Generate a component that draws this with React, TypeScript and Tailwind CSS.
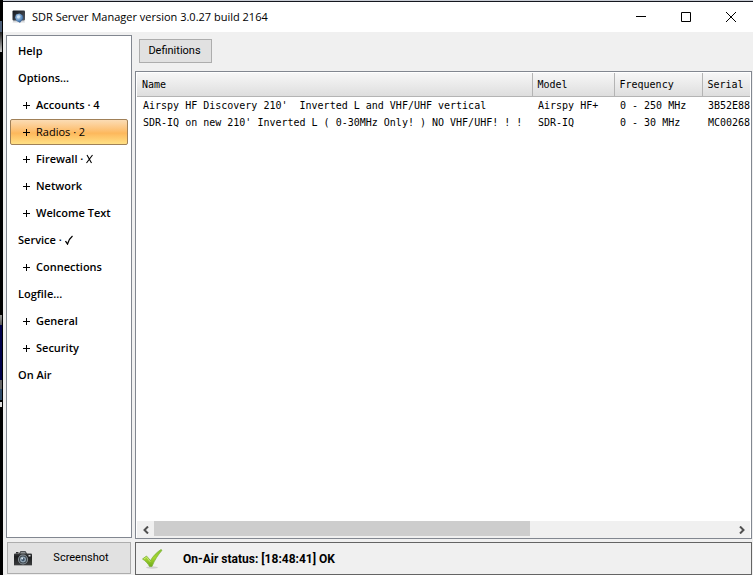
import React from "react";
import clsx from "clsx";

interface NavItem {
  label: string;
  child?: boolean;
  mark?: "cross" | "check";
}

interface Radio {
  name: string;
  model: string;
  frequency: string;
  serial: string;
}

const navItems: NavItem[] = [
  { label: "Help" },
  { label: "Options..." },
  { label: "Accounts · 4", child: true },
  { label: "Radios · 2", child: true },
  { label: "Firewall ·", child: true, mark: "cross" },
  { label: "Network", child: true },
  { label: "Welcome Text", child: true },
  { label: "Service ·", mark: "check" },
  { label: "Connections", child: true },
  { label: "Logfile..." },
  { label: "General", child: true },
  { label: "Security", child: true },
  { label: "On Air" },
];

const radios: Radio[] = [
  {
    name: "Airspy HF Discovery 210'  Inverted L and VHF/UHF vertical",
    model: "Airspy HF+",
    frequency: "0 - 250 MHz",
    serial: "3B52E88",
  },
  {
    name: "SDR-IQ on new 210' Inverted L ( 0-30MHz Only! ) NO VHF/UHF! ! !",
    model: "SDR-IQ",
    frequency: "0 - 30 MHz",
    serial: "MC00268",
  },
];

const AppIcon = () => (
  <svg width="14" height="14" viewBox="0 0 14 14">
    <defs>
      <linearGradient id="screen" x1="0" y1="0" x2="1" y2="1">
        <stop offset="0" stopColor="#11151b" />
        <stop offset="1" stopColor="#555b64" />
      </linearGradient>
      <radialGradient id="globe" cx="0.4" cy="0.35" r="0.7">
        <stop offset="0" stopColor="#c3dcf2" />
        <stop offset="0.6" stopColor="#5d8dc0" />
        <stop offset="1" stopColor="#1c4275" />
      </radialGradient>
    </defs>
    <path d="M1.500 10h10.500l1 2.500H.5z" fill="#d5d8dc" />
    <rect x="0.5" y="0.5" width="12.5" height="10" rx="1" fill="url(#screen)" />
    <path d="M4 4.500L7.500 3.500l3 1.800.8 3.200L8 12.800 4.500 11 3 7.500z" fill="url(#globe)" />
    <path d="M5 6l2-1 1.5 1.5L7 8.5 5 8z" fill="#dcebf8" opacity="0.7" />
  </svg>
);

const CameraIcon = () => (
  <svg width="18" height="17" viewBox="0 0 18 17">
    <defs>
      <linearGradient id="body" x1="0" y1="0" x2="0" y2="1">
        <stop offset="0" stopColor="#55585a" />
        <stop offset="0.4" stopColor="#1c1d1e" />
        <stop offset="1" stopColor="#3a3c3e" />
      </linearGradient>
    </defs>
    <path d="M1 3.5h4L6.5 1h5L13 3.5h4a1 1 0 0 1 1 1V15H0V4.500a1 1 0 0 1 1-1z" fill="url(#body)" />
    <path d="M7 2h4l.8 1.500H6.200z" fill="#8d9194" />
    <rect x="2" y="2" width="2.500" height="1.500" fill="#333" />
    <rect x="14.500" y="5" width="2" height="1.500" fill="#d8dadb" />
    <circle cx="9" cy="9.500" r="5" fill="#8d969d" />
    <circle cx="9" cy="9.500" r="4" fill="#3a4249" />
    <circle cx="9" cy="9.500" r="3" fill="#91a5b5" />
    <circle cx="9" cy="9.500" r="1.700" fill="#41566b" />
    <circle cx="8.200" cy="8.500" r="0.900" fill="#e3edf4" />
    <path d="M0 15h18v1H0z" fill="#a8a8a8" />
  </svg>
);

const StatusIcon = () => (
  <svg width="21" height="20" viewBox="0 0 21 20">
    <defs>
      <linearGradient id="ok" x1="0" y1="0" x2="0" y2="1">
        <stop offset="0" stopColor="#86c32b" />
        <stop offset="0.5" stopColor="#a5d62f" />
        <stop offset="1" stopColor="#6fac1c" />
      </linearGradient>
    </defs>
    <ellipse cx="10" cy="18.500" rx="6" ry="1.200" fill="#cfcfcf" />
    <path
      d="M.5 10L4.500 7l4 4.500C11 7 15 3 19 .5l1 .8C16 6 12.500 11 10 17.500H7.500C6 14.500 3.500 12 .5 10z"
      fill="url(#ok)"
      stroke="#79ae34"
      strokeWidth="0.700"
    />
    <path d="M2 10L4.500 8.200l3.700 4.500" fill="none" stroke="#d2ec8c" strokeWidth="0.800" />
  </svg>
);

const Mark = ({ kind }: { kind: "cross" | "check" }) => (
  <svg className="ml-[3px]" width="9" height="10" viewBox="0 0 9 10" fill="none" stroke="#000">
    {kind === "cross" ? (
      <path d="M1 1l4.500 8M6.500 1L.5 9" strokeWidth="1.100" />
    ) : (
      <path d="M.5 6L2.500 9C3.500 5.500 5 3 7.500 1" strokeWidth="1.300" />
    )}
  </svg>
);

// Slice of the desktop that shows past the window's left edge
const DesktopEdge = () => (
  <div className="w-[3px] shrink-0 bg-black pr-[1px]">
    <div className="mt-[21px] h-[11px] bg-[#4d5f78]" />
    <div className="h-[20px] bg-linear-to-b from-[#222] to-[#c4c4c4]" />
    <div className="mt-[263px] h-[10px] bg-linear-to-b from-[#999] to-[#555]" />
    <div className="h-[55px] bg-[#00004a]" />
    <div className="h-[9px] bg-[#666]" />
    <div className="h-[11px] bg-[#2f4a68]" />
    <div className="mt-[2px] h-[5px] bg-[#dcdcdc]" />
  </div>
);

const TitleBar = () => (
  <header className="flex h-8 shrink-0 items-center border-t border-[#c8ccd4] bg-white shadow-[inset_0_1px_0_#15171f]">
    <div className="flex flex-1 items-center gap-[6px] pl-[9px]">
      <AppIcon />
      <h1 className="text-[11px] leading-4">SDR Server Manager version 3.0.27 build 2164</h1>
    </div>
    <button aria-label="Minimize" className="flex h-full w-[46px] items-center justify-center">
      <svg width="10" height="10" stroke="#000"><path d="M0 4.500h10" /></svg>
    </button>
    <button aria-label="Maximize" className="flex h-full w-[44px] items-center justify-center">
      <svg width="10" height="10" fill="none" stroke="#000"><path d="M.5.5h9v9h-9z" /></svg>
    </button>
    <button aria-label="Close" className="flex h-full w-[45px] items-center justify-center">
      <svg width="10" height="10" stroke="#000"><path d="M0 0l10 10M10 0L0 10" /></svg>
    </button>
  </header>
);

const Sidebar = () => (
  <nav className="flex flex-1 flex-col gap-[1px] border border-[#828790] bg-white px-[3px] pt-[2px]">
    {navItems.map((item) => {
      const selected = item.label.startsWith("Radios");
      return (
        <button
          key={item.label}
          className={clsx(
            "flex h-[26px] items-center rounded-[2px] border text-left text-[11px] whitespace-nowrap",
            item.child ? "pl-3" : "pl-[7px]",
            selected
              ? "border-[#a08058] bg-linear-to-b from-[#fbdcb4] from-0% via-[#fdb85c] via-55% to-[#ffe084] font-medium"
              : "border-transparent font-semibold"
          )}
        >
          {item.child && (
            <svg className="mr-[6px]" width="7" height="7" stroke="#000">
              <path d="M0 3.500h7M3.500 0v7" />
            </svg>
          )}
          <span>{item.label}</span>
          {item.mark && <Mark kind={item.mark} />}
        </button>
      );
    })}
  </nav>
);

const headCell = "border-r border-b border-[#b4b4b4] pl-[5px] text-left font-normal";
const bodyCell = "overflow-hidden pl-[6px] whitespace-pre";

const RadioTable = () => (
  <table className="w-full table-fixed border-collapse font-['DejaVu_Sans_Mono',monospace] text-[10px] leading-[17px]">
    <colgroup>
      <col />
      <col className="w-[82px]" />
      <col className="w-[88px]" />
      <col className="w-[48px]" />
    </colgroup>
    <thead>
      <tr className="h-[23px] bg-linear-to-b from-[#f7f7f7] to-[#dedede]">
        <th className={headCell}>Name</th>
        <th className={headCell}>Model</th>
        <th className={headCell}>Frequency</th>
        <th className="border-b border-[#b4b4b4] pl-[5px] text-left font-normal">Serial</th>
      </tr>
    </thead>
    <tbody>
      {radios.map((radio) => (
        <tr key={radio.serial}>
          <td className={bodyCell}>{radio.name}</td>
          <td className={bodyCell}>{radio.model}</td>
          <td className={bodyCell}>{radio.frequency}</td>
          <td className={bodyCell}>{radio.serial}</td>
        </tr>
      ))}
    </tbody>
  </table>
);

const ScrollBar = () => (
  <div className="flex h-[17px] bg-[#f0f0f0]">
    <button aria-label="Scroll left" className="flex w-[17px] items-center justify-center">
      <svg width="6" height="8" fill="none" stroke="#505050" strokeWidth="2"><path d="M5 .5L1.500 4 5 7.500" /></svg>
    </button>
    <div className="flex-1">
      <div className="h-[15px] w-[65%] bg-[#cdcdcd]" />
    </div>
    <button aria-label="Scroll right" className="flex w-[17px] items-center justify-center">
      <svg width="6" height="8" fill="none" stroke="#505050" strokeWidth="2"><path d="M1 .5L4.500 4 1 7.500" /></svg>
    </button>
  </div>
);

const App: React.FC = () => {
  return (
    <div className="flex h-screen overflow-hidden bg-[#f0f0f0] font-['Open_Sans',sans-serif] text-black">
      <DesktopEdge />
      <div className="flex min-w-0 flex-1 flex-col">
        <TitleBar />
        <div className="flex min-h-0 flex-1 gap-[3px] pr-[1px] pl-[3px]">
          <aside className="flex w-[126px] shrink-0 flex-col gap-1 pt-[3px] pb-[1px]">
            <Sidebar />
            <div className="flex h-8 px-[1px]">
              <button className="flex flex-1 items-center border border-[#adadad] bg-[#e1e1e1] pl-[6px] font-['Roboto',sans-serif] text-[11px]">
                <CameraIcon />
                <span className="flex-1 text-center">Screenshot</span>
              </button>
            </div>
          </aside>
          <main className="flex min-w-0 flex-1 flex-col">
            <div className="flex px-1 pt-[7px] pb-2">
              <button className="h-6 w-[73px] border border-[#adadad] bg-[#e1e1e1] pr-[2px] font-['Roboto',sans-serif] text-[11px] leading-4">
                Definitions
              </button>
            </div>
            <section className="flex min-h-0 flex-1 flex-col justify-between overflow-hidden border border-[#828790] bg-white p-[1px] pb-0">
              <RadioTable />
              <ScrollBar />
            </section>
            <footer className="mt-[3px] flex h-[33px] shrink-0 items-center gap-5 border border-[#646464] pl-[6px]">
              <StatusIcon />
              <p className="font-['Roboto',sans-serif] text-[12px] font-bold">On-Air status: [18:48:41] OK</p>
            </footer>
          </main>
        </div>
      </div>
    </div>
  );
};

export default App;
